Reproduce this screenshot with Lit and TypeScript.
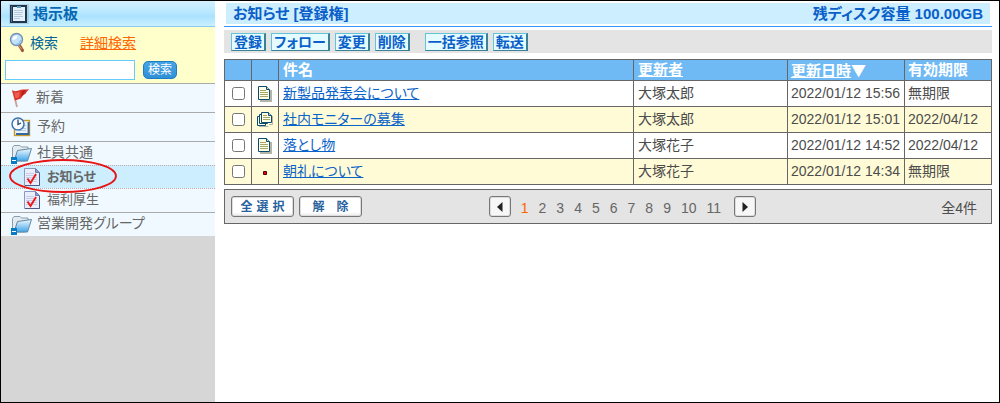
import { LitElement, html, css, svg } from "lit";
import { customElement, state } from "lit/decorators.js";
import { classMap } from "lit/directives/class-map.js";

const boardIcon = html`<svg width="20" height="20" viewBox="0 0 20 20" aria-hidden="true">
  <rect x="0" y="0" width="20" height="20" fill="#8fb0c4" opacity=".45" />
  <rect x="1" y="1" width="17" height="18" fill="#21364f" />
  <rect x="2" y="2" width="1" height="16" fill="#4a6f94" />
  <rect x="4" y="3" width="12" height="14" fill="#e6f1fa" />
  <rect x="8" y="2" width="4" height="2" fill="#5f9fbb" />
  <path d="M5 6.500h9M5 8.500h9M5 10.500h8M5 12.500h9M5 14.500h6" stroke="#b4c9dd" />
</svg>`;

const searchIcon = html`<svg width="18" height="22" viewBox="0 0 18 22" aria-hidden="true">
  <path d="M10.500 13.500l3 5" stroke="#a35a3a" stroke-width="3.200" stroke-linecap="round" />
  <path d="M9.500 13l3 4" stroke="#d9a284" stroke-width="1" />
  <circle cx="7.500" cy="7.500" r="6" fill="#c3e3fa" stroke="#7090b8" stroke-width="1.400" />
  <path d="M3.500 8a4.500 4.500 0 0 1 4-4.500c2 .5 1 4-4 4.500z" fill="#fff" />
  <path d="M11.500 8a4 4 0 0 1-4 4" stroke="#8fc4ef" stroke-width="1.500" fill="none" />
</svg>`;

const flagIcon = html`<svg width="20" height="20" viewBox="0 0 20 20" aria-hidden="true">
  <path d="M2 3L6 19" stroke="#c9a294" stroke-width="1.800" />
  <path d="M1 2c3 2 5 1 8 0 3-1 6 0 9-1-1 2-3 3-3.500 5-2 .5-3 2-4.500 4.500-2 1-4 1-6 2z" fill="#d9362b" />
  <path d="M3 4c2 1.500 4 0 6 0l-1 5c-1 1-2 1-3.500 1z" fill="#ed5c4e" />
  <path d="M11 3l4-1-3 5-2 1z" fill="#b51f1c" />
</svg>`;

const clockIcon = html`<svg width="21" height="20" viewBox="0 0 21 20" aria-hidden="true">
  <rect x="3.500" y="3.500" width="15" height="15" fill="#e9f2fa" stroke="#c79a2e" stroke-width="1.400" />
  <path d="M5 17h12.500V5" stroke="#34679f" stroke-width="1.800" fill="none" />
  <path d="M9 11.500h6M8 13.500h7M13 8.500h2" stroke="#b7cadd" />
  <circle cx="7" cy="7" r="6" fill="#f8fcff" stroke="#3e73ad" stroke-width="1.500" />
  <path d="M7 2.500V7.500L10 6" stroke="#24466f" stroke-width="1.300" fill="none" />
</svg>`;

const folderIcon = html`<svg width="22" height="20" viewBox="0 0 22 20" aria-hidden="true">
  <defs>
    <linearGradient id="front" x1="0" y1="0" x2="0" y2="1">
      <stop offset="0" stop-color="#f2faff" />
      <stop offset="1" stop-color="#3fa4ea" />
    </linearGradient>
  </defs>
  <path d="M1.500 15V3.500l1.500-2h6L10.500 3H17v5l-3 9H3z" fill="#e3eaf0" stroke="#8a9dac" />
  <path d="M6.500 6.500l14-2-4 12.500H3z" fill="url(#front)" stroke="#6487a3" />
  <rect x="0" y="13" width="6" height="7" fill="#087bc4" />
  <rect x="1" y="16" width="4" height="1" fill="#fff" />
</svg>`;

const noteIcon = html`<svg width="18" height="20" viewBox="0 0 18 20" aria-hidden="true">
  <path d="M1.500 1.500h11l4 4v13h-15z" fill="#e9eefa" stroke="#8c98bd" />
  <path d="M12.500 1.500v4h4z" fill="#8e9cc8" stroke="#6f7fb0" />
  <path d="M16.500 6v12.500H2" stroke="#4d5987" fill="none" />
  <path d="M3 6.500h8M3 8.500h11M3 10.500h11M3 12.500h11M3 14.500h11" stroke="#c3cdea" />
  <path d="M4.500 11.500l3 4.500 5.500-9" stroke="#f01414" stroke-width="1.800" fill="none" />
</svg>`;

const sheet = (x: number, y: number) => svg`
  <path d="M${x + 0.5} ${y + 0.5}h8l3 3v10h-11z" fill="#ffffe4" stroke="#0c4a6e" />
  <path d="M${x + 8.5} ${y + 0.5}v3h3" fill="#b6d9d9" stroke="#0c4a6e" />`;

const docIcon = html`<svg width="16" height="16" viewBox="0 0 16 16" role="img" aria-label="文書">
  <path d="M14 4v11H3" stroke="#b4b4a8" stroke-width="2" fill="none" />
  ${sheet(1, 0)}
  <path d="M3 4.500h6M3 6.500h8M3 8.500h8M3 10.500h8" stroke="#a3a36c" />
</svg>`;

const docsIcon = html`<svg width="18" height="16" viewBox="0 0 18 16" role="img" aria-label="複数の文書">
  <path d="M16.500 4v8.500H13M12.500 14.500H3" stroke="#b4b4a8" fill="none" />
  <path d="M1.500 4.500h8v9h-8z" fill="#ffffe4" stroke="#0c4a6e" />
  <path d="M3.500 2.500h8v9h-8z" fill="#ffffe4" stroke="#0c4a6e" />
  <path d="M5.500 .5h7l3 3v7h-10z" fill="#ffffe4" stroke="#0c4a6e" />
  <path d="M12.500 .5v3h3" fill="#b6d9d9" stroke="#0c4a6e" />
  <path d="M7 3.500h4M7 5.500h7M7 7.500h7" stroke="#a3a36c" />
</svg>`;

const dotIcon = html`<svg width="16" height="16" viewBox="0 0 16 16" role="img" aria-label="本文のみ">
  <rect x="6" y="7" width="4" height="4" rx="1" fill="#400" />
  <rect x="7" y="8" width="2" height="2" fill="#f00" />
</svg>`;

const icons = { doc: docIcon, docs: docsIcon, dot: dotIcon };

interface Article {
  kind: keyof typeof icons;
  title: string;
  author: string;
  updated: string;
  expires: string;
}

const articles: Article[] = [
  { kind: "doc", title: "新製品発表会について", author: "大塚太郎", updated: "2022/01/12 15:56", expires: "無期限" },
  { kind: "docs", title: "社内モニターの募集", author: "大塚太郎", updated: "2022/01/12 15:01", expires: "2022/04/12" },
  { kind: "doc", title: "落とし物", author: "大塚花子", updated: "2022/01/12 14:52", expires: "2022/04/12" },
  { kind: "dot", title: "朝礼について", author: "大塚花子", updated: "2022/01/12 14:34", expires: "無期限" },
];

@customElement("board-sidebar")
export class BoardSidebar extends LitElement {
  static styles = css`
    :host { display: block; background: #d6d6d6; }
    h1, form, ul { margin: 0; padding: 0; }
    svg { flex: none; display: block; }
    .heading {
      display: flex; align-items: center; gap: 4px; height: 26px; padding-left: 8px; box-sizing: border-box;
      font-size: 15px; line-height: 24px; color: #0868b4;
      background: linear-gradient(#d4f1ff, #b8e8ff 45%, #aae2ff 60%, #c9f0ff);
      border-bottom: 1px solid #8ccbf5;
    }
    .search { background: #ffc; padding: 5px 4px 3px; border-bottom: 1px solid #aaa; }
    .row { display: flex; align-items: center; }
    .label { margin-left: 3px; color: #006699; line-height: 20px; }
    .label-row { height: 22px; padding-left: 4px; }
    .detail { margin-left: 22px; color: #f60; line-height: 20px; }
    .box-row { gap: 8px; margin-top: 6px; }
    .query {
      width: 130px; height: 20px; box-sizing: border-box; border: 1px solid #66ccff; background: #fff;
      font: inherit; padding: 0 3px; outline: none;
    }
    .go {
      height: 18px; width: 34px; padding: 0; border: 1px solid #1c7dc2; border-radius: 5px;
      background: linear-gradient(#4aa5e4, #2f8fd8); color: #fff; font: inherit; font-size: 12px; line-height: 15px;
    }
    ul { list-style: none; }
    .item { position: relative; background: #f0f9ff; }
    .item a { display: flex; align-items: center; color: #666; text-decoration: none; height: 28px; gap: 5px; padding-left: 10px; }
    .text { line-height: 18px; padding-bottom: 3px; }
    .ruled { border-bottom: 1px solid #aaa; }
    .item .folder { height: 23px; gap: 4px; }
    .item .leaf { height: 22px; gap: 6px; padding-left: 22px; border-top: 1px dotted #c3a9a9; font-size: 13px; }
    .leaf .text { padding-bottom: 0; }
    .current { background: #cef; font-weight: bold; z-index: 1; }
    .last { padding-bottom: 1px; }
    .mark { position: absolute; left: 8px; top: -6px; }
  `;

  render() {
    return html`
      <h1 class="heading">${boardIcon}掲示板</h1>
      <form class="search" @submit=${(e: Event) => e.preventDefault()}>
        <div class="row label-row">
          ${searchIcon}<label class="label" for="q">検索</label>
          <a class="detail" href="#detail">詳細検索</a>
        </div>
        <div class="row box-row">
          <input class="query" id="q" type="text" />
          <button class="go">検索</button>
        </div>
      </form>
      <nav>
        <ul>
          <li class="item ruled"><a href="#new">${flagIcon}<span class="text">新着</span></a></li>
          <li class="item ruled"><a href="#reserved">${clockIcon}<span class="text">予約</span></a></li>
          <li class="item"><a class="folder" href="#common">${folderIcon}<span class="text">社員共通</span></a></li>
          <li class="item current">
            <a class="leaf" href="#notice" aria-current="page">${noteIcon}<span class="text">お知らせ</span></a>
            <svg class="mark" width="108" height="34" viewBox="0 0 108 34" aria-hidden="true">
              <ellipse cx="54" cy="17" rx="53" ry="16" fill="none" stroke="#e61414" stroke-width="1.800" />
            </svg>
          </li>
          <li class="item ruled last"><a class="leaf" href="#welfare">${noteIcon}<span class="text">福利厚生</span></a></li>
          <li class="item"><a class="folder" href="#sales">${folderIcon}<span class="text">営業開発グループ</span></a></li>
        </ul>
      </nav>
    `;
  }
}

@customElement("board-articles")
export class BoardArticles extends LitElement {
  @state() private selected = new Set<number>();

  static styles = css`
    :host { display: block; padding: 1px 7px 0 9px; }
    h2 { margin: 0; font-size: inherit; }
    .title { padding: 1px 2px 2px; border-bottom: 1px solid #3399ff; background: #fff; }
    .title-inner {
      display: flex; justify-content: space-between; padding: 0 7px; background: #cef;
      color: #0a5fc8; font-size: 15px; font-weight: bold; line-height: 21px;
    }
    .tools { display: flex; align-items: center; gap: 5px; margin-top: 3px; height: 23px; padding-left: 7px; background: #e4e4e4; }
    .tool {
      height: 18px; padding: 0 2px; border: 1px solid; border-color: #66c3d6 #3b8296 #3b8296 #66c3d6;
      border-right-width: 2px; background: #e4fbff; color: #0a5fc8;
      font: inherit; font-feature-settings: inherit; font-weight: bold; line-height: 16px;
    }
    .gap { margin-left: 10px; }
    table { width: 100%; margin-top: 6px; border-collapse: collapse; table-layout: fixed; color: #4c4c4c; }
    th, td {
      box-sizing: border-box; border: 1px solid #666; padding: 0 0 0 4px; text-align: left;
      height: 26px; line-height: 20px; white-space: nowrap;
    }
    th { height: 21px; background: #6fbaf5; color: #fff; font-size: 15px; line-height: 18px; }
    td { padding-bottom: 2px; }
    th a { color: inherit; }
    .sort { font-family: "Noto Sans CJK JP", sans-serif; }
    .mini { width: 27px; padding: 0; text-align: center; }
    .mini svg, .mini input { display: block; margin: 0 auto; }
    .mini input { width: 13px; height: 13px; }
    .author { width: 154px; }
    .updated { width: 117px; padding-left: 3px; }
    .expires { width: 87px; padding-left: 3px; }
    tbody tr:nth-child(even) { background: #fffbd6; }
    td a { color: #0a63c9; }
    .foot {
      display: grid; grid-template-columns: 7fr auto 6fr; align-items: center; margin-top: 4px; height: 33px;
      padding: 0 14px 0 6px; border: 1px solid #666; background: #e4e4e4; color: #666;
    }
    .picks { display: flex; gap: 5px; }
    .pick, .step {
      border: 1px solid #777; border-radius: 3px; padding: 0; height: 21px;
      background: linear-gradient(#fff, #fff 80%, #e8e8e8);
      box-shadow: inset 0 0 0 1px #ddd;
    }
    .pick {
      display: flex; justify-content: center; align-items: center; gap: 4px; width: 63px;
      font: inherit; font-size: 12px; font-weight: bold; color: #28629c; line-height: 18px;
    }
    .wide { gap: 12px; }
    .step { width: 22px; display: flex; align-items: center; justify-content: center; background: #f7f7f7; }
    .pager { display: flex; align-items: center; gap: 10px; }
    .pager a { color: inherit; text-decoration: none; line-height: 16px; padding-top: 3px; }
    .pager .on { color: #f60; }
    .next { margin-left: 3px; }
    .total { text-align: right; color: #4c4c4c; }
  `;

  private toggle(i: number) {
    const next = new Set(this.selected);
    next.has(i) ? next.delete(i) : next.add(i);
    this.selected = next;
  }

  render() {
    return html`
      <div class="title">
        <div class="title-inner"><h2>お知らせ [登録権]</h2><span>残ディスク容量 100.00GB</span></div>
      </div>
      <div class="tools">
        ${["登録", "フォロー", "変更", "削除"].map((t) => html`<button class="tool">${t}</button>`)}
        <button class="tool gap">一括参照</button>
        <button class="tool">転送</button>
      </div>
      <table>
        <thead>
          <tr>
            <th class="mini"></th>
            <th class="mini"></th>
            <th>件名</th>
            <th class="author"><a href="#author">更新者</a></th>
            <th class="updated"><a href="#updated">更新日時</a><span class="sort">▼</span></th>
            <th class="expires">有効期限</th>
          </tr>
        </thead>
        <tbody>
          ${articles.map(
            (a, i) => html`<tr>
              <td class="mini">
                <input type="checkbox" aria-label=${a.title} .checked=${this.selected.has(i)} @change=${() => this.toggle(i)} />
              </td>
              <td class="mini">${icons[a.kind]}</td>
              <td><a href="#article">${a.title}</a></td>
              <td>${a.author}</td>
              <td class="updated">${a.updated}</td>
              <td class="expires">${a.expires}</td>
            </tr>`
          )}
        </tbody>
      </table>
      <div class="foot">
        <div class="picks">
          <button class="pick" @click=${() => (this.selected = new Set(articles.keys()))}>
            <span>全</span><span>選</span><span>択</span>
          </button>
          <button class="pick wide" @click=${() => (this.selected = new Set())}><span>解</span><span>除</span></button>
        </div>
        <div class="pager">
          <button class="step" aria-label="前へ">
            <svg width="6" height="10" viewBox="0 0 6 10"><path d="M5.500 0v10L0 5z" fill="#222" /></svg>
          </button>
          ${Array.from({ length: 11 }, (_, i) => i + 1).map(
            (n) => html`<a href="#page" class=${classMap({ on: n === 1 })}>${n}</a>`
          )}
          <button class="step next" aria-label="次へ">
            <svg width="6" height="10" viewBox="0 0 6 10"><path d="M.5 0v10L6 5z" fill="#222" /></svg>
          </button>
        </div>
        <div class="total">全4件</div>
      </div>
    `;
  }
}

@customElement("app-root")
export class AppRoot extends LitElement {
  static styles = css`
    :host {
      display: grid; grid-template-columns: 214px 1fr; min-height: 100vh; box-sizing: border-box;
      border: 1px solid #000; background: #fff;
      font-family: "Liberation Sans", "Noto Sans CJK JP", sans-serif; font-size: 14px;
      font-feature-settings: "palt";
    }
  `;

  render() {
    return html`<board-sidebar></board-sidebar><board-articles></board-articles>`;
  }
}
